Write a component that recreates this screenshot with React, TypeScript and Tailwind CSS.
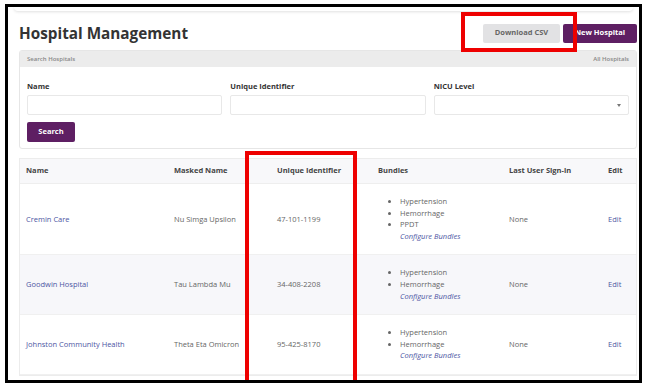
import React from "react";

const rows = [
  { name: "Cremin Care", masked: "Nu Simga Upsilon", id: "47-101-1199", bundles: ["Hypertension", "Hemorrhage", "PPDT"], striped: false },
  { name: "Goodwin Hospital", masked: "Tau Lambda Mu", id: "34-408-2208", bundles: ["Hypertension", "Hemorrhage"], striped: true },
  { name: "Johnston Community Health", masked: "Theta Eta Omicron", id: "95-425-8170", bundles: ["Hypertension", "Hemorrhage"], striped: false },
];

export default function App() {
  return (
    <div className="w-[646px] h-[388px] bg-white overflow-hidden" style={{ fontFamily: '"Open Sans", "Liberation Sans", sans-serif' }}>
      <div className="ml-[5px] mt-[4px] w-[637px] h-[379px] border-[3px] border-black relative overflow-hidden bg-white">
        <div className="mx-[6px] h-[4px] rounded-b-[4px] shadow-[0_1px_3px_rgba(0,0,0,0.12)] bg-white" />
        <div className="pl-[11px] pr-[2px]">
          {/* header */}
          <div className="mt-[11px] flex items-center justify-between h-[22px]">
            <h1 className="text-[15.3px] leading-[22px] font-bold text-[#333]">Hospital Management</h1>
            <div className="flex items-center gap-[3px]">
              <button className="h-[19px] w-[77px] bg-[#e2e2e4] text-[#666] text-[7.5px] font-bold rounded-[2px]">Download CSV</button>
              <button className="h-[19px] w-[74px] bg-[#5e1f63] text-white text-[7.5px] font-bold rounded-[2px]">New Hospital</button>
            </div>
          </div>

          {/* search card */}
          <div className="mt-[6px] border border-[#e6e6e6] rounded-[3px]">
            <div className="h-[16px] bg-[#ececec] flex items-center justify-between px-[7px] text-[6px] text-[#888] font-semibold">
              <span>Search Hospitals</span>
              <span>All Hospitals</span>
            </div>
            <div className="px-[7px] pt-[14px] pb-[6px]">
              <div className="grid grid-cols-3 gap-[8px]">
                {["Name", "Unique Identifier", "NICU Level"].map((l, i) => (
                  <div key={l}>
                    <div className="text-[7.5px] leading-[10px] font-bold text-[#333]">{l}</div>
                    <div className="mt-[4px] h-[20px] border border-[#e8e8e8] rounded-[2px] bg-white relative">
                      {i === 2 && (
                        <span className="absolute right-[7px] top-[8px] w-0 h-0 border-l-[2px] border-r-[2px] border-t-[3px] border-l-transparent border-r-transparent border-t-[#777]" />
                      )}
                    </div>
                  </div>
                ))}
              </div>
              <button className="mt-[7px] h-[20px] w-[48px] bg-[#5e1f63] text-white text-[7.5px] font-bold rounded-[2px]">Search</button>
            </div>
          </div>

          {/* table */}
          <div className="mt-[9px] border border-[#ececec] text-[7.5px]">
            <div className="grid grid-cols-[148px_103px_101px_131px_99px_1fr] h-[25px] items-center bg-[#f8f8fa] font-bold text-[#444] border-b border-[#eeeeee]">
              <div className="pl-[6px]">Name</div>
              <div className="pl-[6px]">Masked Name</div>
              <div className="pl-[6px]">Unique Identifier</div>
              <div className="pl-[6px]">Bundles</div>
              <div className="pl-[6px]">Last User Sign-in</div>
              <div className="pl-[6px]">Edit</div>
            </div>
            {rows.map((r) => (
              <div
                key={r.name}
                className={`grid grid-cols-[148px_103px_101px_131px_99px_1fr] items-center py-[12px] border-b border-[#f0f0f0] text-[#666] ${r.striped ? "bg-[#f7f7fa]" : "bg-white"}`}
              >
                <div className="pl-[6px] text-[#4d56a3]">{r.name}</div>
                <div className="pl-[6px]">{r.masked}</div>
                <div className="pl-[6px]">{r.id}</div>
                <div className="pl-[6px] leading-[11.6px]">
                  <ul className="list-disc pl-[22px]">
                    {r.bundles.map((b) => (
                      <li key={b}>{b}</li>
                    ))}
                  </ul>
                  <div className="pl-[22px] italic text-[#4d56a3]">Configure Bundles</div>
                </div>
                <div className="pl-[6px]">None</div>
                <div className="pl-[6px] text-[#4d56a3]">Edit</div>
              </div>
            ))}
          </div>
        </div>

        {/* annotation boxes */}
        <div className="absolute left-[453px] top-[5px] w-[116px] h-[40px] border-[4px] border-[#ee0000]" />
        <div className="absolute left-[237px] top-[144px] w-[112px] h-[260px] border-[4px] border-[#ee0000]" />
      </div>
    </div>
  );
}
